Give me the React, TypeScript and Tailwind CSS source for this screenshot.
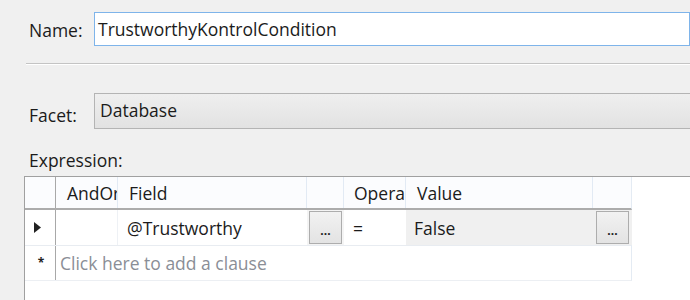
import React from "react";

const cols = "grid-cols-[31px_62px_189px_37px_62px_187px_39px]";

function DotsButton() {
  return (
    <div className="flex h-[33px] w-[33px] items-end justify-center border border-[#adadad] bg-gradient-to-b from-[#f2f2f2] to-[#e3e3e3] pb-[6px] text-[12px] font-bold leading-none text-[#1b1b1b]">
      ...
    </div>
  );
}

export default function App() {
  return (
    <div
      className="h-[300px] w-[690px] overflow-hidden bg-[#f0f0f0] text-[17.5px] leading-[22px] text-[#1b1b1b]"
      style={{ fontFamily: '"Open Sans", "Noto Sans", sans-serif' }}
    >
      {/* name */}
      <div className="flex items-center pt-[12px]">
        <div className="w-[94px] pl-[29px] pt-[2px]">Name:</div>
        <div className="flex h-[34px] flex-1 items-center border border-[#7eb4ea] bg-white pl-[3px]">
          TrustworthyKontrolCondition
        </div>
      </div>

      <div className="ml-[26px] mt-[17px] h-[2px] border-t border-b border-t-[#c4c4c4] border-b-white" />

      {/* facet */}
      <div className="mt-[28px] flex items-center">
        <div className="w-[94px] pl-[29px] pt-[8px]">Facet:</div>
        <div className="flex h-[36px] flex-1 items-center border border-r-0 border-[#b4b4b4] bg-gradient-to-b from-[#efefef] to-[#e2e2e2] pb-[3px] pl-[5px]">
          Database
        </div>
      </div>

      <div className="mt-[20px] pl-[29px]">Expression:</div>

      {/* grid */}
      <div className="ml-[24px] mt-[5px] h-[130px] border-l border-t border-[#a0a0a0] bg-white">
        <div className={`grid w-[607px] ${cols} h-[33px] border-b-2 border-[#acacac] bg-[#fbfcfe] border-r border-r-[#e4ebf3]`}>
          <div className="border-r border-[#a8a8a8]" />
          <div className="flex items-center overflow-hidden whitespace-nowrap border-r border-[#e2eaf4] pl-[11px]">
            AndOr
          </div>
          <div className="flex items-center border-r border-[#e2eaf4] pl-[11px]">Field</div>
          <div className="border-r border-[#e2eaf4]" />
          <div className="flex items-center overflow-hidden whitespace-nowrap border-r border-[#e2eaf4] pl-[10px]">
            Opera
          </div>
          <div className="flex items-center border-r border-[#e2eaf4] pl-[11px]">Value</div>
          <div />
        </div>

        <div className={`grid w-[607px] ${cols} h-[36px] border-b border-[#e8ecf1] border-r border-r-[#e4ebf3]`}>
          <div className="flex items-center border-r border-[#a8a8a8] pl-[9px]">
            <svg width="7" height="11" viewBox="0 0 7 11">
              <path d="M0 0 L7 5.5 L0 11 Z" fill="#222" />
            </svg>
          </div>
          <div className="border-r border-[#eef1f5]" />
          <div className="flex items-center pl-[9px]">@Trustworthy</div>
          <div className="flex items-center justify-center bg-[#f4f4f4]">
            <DotsButton />
          </div>
          <div className="flex items-center pl-[9px]">=</div>
          <div className="flex items-center bg-[#f0f0f0] pl-[8px]">False</div>
          <div className="flex items-center justify-center bg-[#f0f0f0]">
            <DotsButton />
          </div>
        </div>

        <div className="flex h-[35px] w-[607px] border-b border-[#eceff3] border-r border-r-[#e4ebf3]">
          <div className="flex w-[31px] items-center justify-center border-r border-[#a8a8a8] pl-[2px] text-[12px] font-bold text-[#222]">
            *
          </div>
          <div className="flex flex-1 items-center pl-[4px] text-[#8a8e96]">
            Click here to add a clause
          </div>
        </div>
      </div>
    </div>
  );
}
